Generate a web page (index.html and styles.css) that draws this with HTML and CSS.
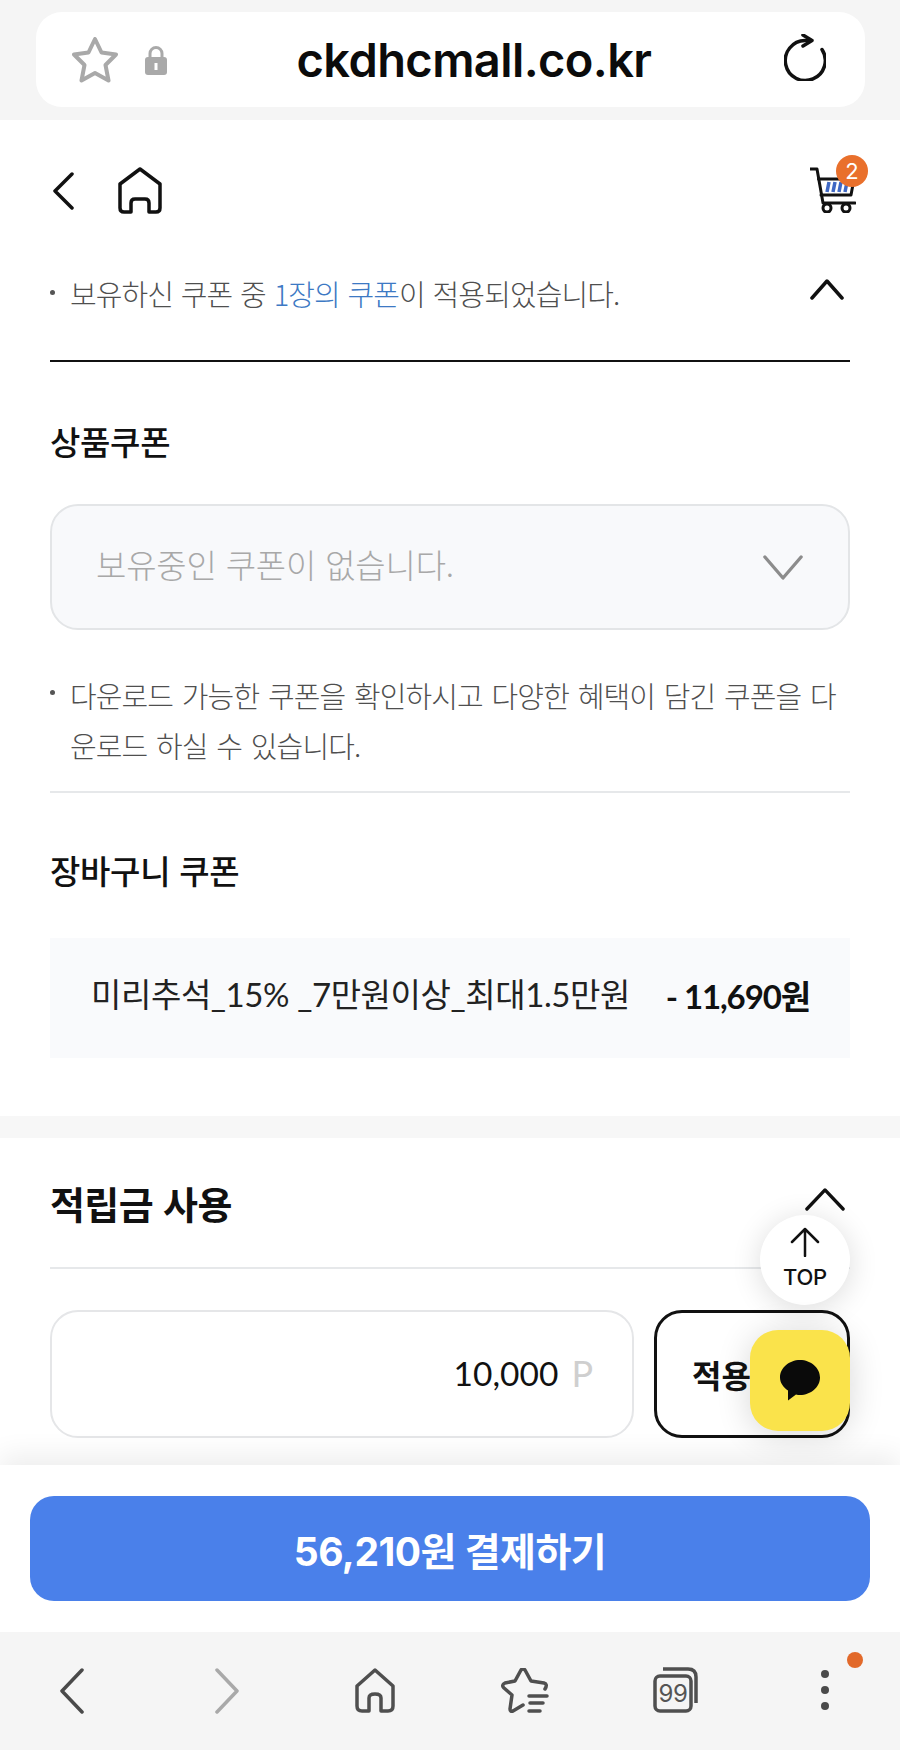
FILE: index.html
```html
<!DOCTYPE html>
<html lang="ko">
<head>
<meta charset="utf-8">
<title>ckdhcmall.co.kr</title>
<link rel="stylesheet" href="styles.css">
</head>
<body>
<div class="screen">
  <div class="browser-top">
    <div class="url-pill">
      <svg class="ic-star" viewBox="0 0 46 46"><path d="M23 2 L29.500 15.500 L44 17.500 L33.500 28 L36.500 43.500 L23 36 L9.500 43.500 L12.500 28 L2 17.500 L16.500 15.500 Z"/></svg>
      <svg class="ic-lock" viewBox="0 0 24 30"><path class="shackle" d="M6 14 V8.500 a6 6 0 0 1 12 0 V14"/><rect class="lock-body" x="1" y="12" width="22" height="18" rx="3"/><rect class="lock-hole" x="10.500" y="18" width="3" height="7"/></svg>
      <span class="url-text">ckdhcmall.co.kr</span>
      <svg class="ic-reload" viewBox="0 0 42 47"><path d="M38 15.500 A20 20 0 1 1 21 6.500 H26"/><path d="M19 1 L28 6.500 L19 12"/></svg>
    </div>
  </div>

  <main class="main">
    <header class="page-head">
      <div class="head-left">
        <svg class="ic-back" viewBox="0 0 21 38"><path d="M19 2 L2 19 L19 36"/></svg>
        <svg class="ic-home" viewBox="0 0 44 47"><path d="M22 2 L42 17 V41 Q42 45 38 45 H31 V36 Q31 32 27 32 H17 Q13 32 13 36 V45 H6 Q2 45 2 41 V17 Z"/></svg>
      </div>
      <div class="cart">
        <svg class="ic-cart" viewBox="0 0 46 46"><path class="cart-line" d="M0.500 2 H7 L13 36 H45"/><path class="cart-line" d="M8.500 12 H44 L41 28 H11"/><path class="cart-bars" d="M17 25 L19 15 M23 25 L25 15 M29 25 L31 15 M35 25 L37 15"/><circle class="cart-line" cx="17" cy="41" r="4"/><circle class="cart-line" cx="36" cy="41" r="4"/></svg>
        <span class="cart-badge">2</span>
      </div>
    </header>

    <section class="coupons">
      <div class="notice-row">
        <p class="note note-top">보유하신 쿠폰 중 <span class="blue">1장의 쿠폰</span>이 적용되었습니다.</p>
        <svg class="ic-up" viewBox="0 0 34 22"><path d="M2 20 L17 3 L32 20"/></svg>
      </div>

      <h2 class="sub-title sub-first">상품쿠폰</h2>
      <div class="select-box">
        <span>보유중인 쿠폰이 없습니다.</span>
        <svg class="ic-down" viewBox="0 0 42 26"><path d="M2 2 L21 24 L40 2"/></svg>
      </div>
      <p class="note note-long">다운로드 가능한 쿠폰을 확인하시고 다양한 혜택이 담긴 쿠폰을 다운로드 하실 수 있습니다.</p>

      <h2 class="sub-title sub-second">장바구니 쿠폰</h2>
      <div class="coupon-row">
        <span class="coupon-name">미리추석_15% _7만원이상_최대1.5만원</span>
        <strong class="coupon-price">- 11,690원</strong>
      </div>
    </section>

    <section class="points">
      <div class="points-head">
        <h2 class="points-title">적립금 사용</h2>
        <svg class="ic-up-lg" viewBox="0 0 42 25"><path d="M2 23 L21 3 L40 23"/></svg>
      </div>
      <div class="points-form">
        <div class="points-input"><span class="points-val">10,000</span><span class="points-unit">P</span></div>
        <button class="apply-btn">적용</button>
      </div>
    </section>

    <button class="top-btn">
      <svg class="ic-arrow" viewBox="0 0 30 30"><path d="M15 29 V2 M2 15 L15 2 L28 15"/></svg>
      <span>TOP</span>
    </button>
    <div class="kakao">
      <svg class="ic-talk" viewBox="0 0 40 41"><path d="M20 0 C31 0 40 8 40 17.500 C40 27 31 35 20 35 C18.500 35 17.500 34.900 16 34.500 L8 40.500 L8 30.500 C3 27 0 22.500 0 17.500 C0 8 9 0 20 0 Z"/></svg>
    </div>
  </main>

  <div class="pay-bar">
    <button class="pay-btn">56,210원 결제하기</button>
  </div>

  <nav class="browser-nav">
    <svg class="nav-chev" viewBox="0 0 24 46"><path d="M22 2 L2 23 L22 44"/></svg>
    <svg class="nav-chev nav-off" viewBox="0 0 24 46"><path d="M2 2 L22 23 L2 44"/></svg>
    <svg class="nav-home" viewBox="0 0 40 45"><path d="M20 2 L38 18 V38 Q38 43 33 43 H26 V30 Q26 26 20 26 Q14 26 14 30 V43 H7 Q2 43 2 38 V18 Z"/></svg>
    <svg class="nav-fav" viewBox="0 0 48 46"><path d="M44 21 Q47 16 43 15 L30 13 L24 2 Q22 0 20 2 L14 13 L4 15 Q0 17 3 20 L11 27 L9 41 Q9 44 12 43 L22 37"/><path d="M28 28 H46 M29 35 H42 M28 43 H39"/></svg>
    <div class="nav-tabs">
      <svg class="nav-tabs-ic" viewBox="0 0 46 46"><rect x="2" y="9" width="36" height="35" rx="5"/><path d="M10 2 H35 Q43 2 43 10 V36"/></svg>
      <span class="tabs-num">99</span>
    </div>
    <div class="nav-more">
      <i class="dot"></i><i class="dot"></i><i class="dot"></i>
      <i class="more-badge"></i>
    </div>
  </nav>
</div>
</body>
</html>
```

FILE: styles.css
```css
* { box-sizing: border-box; }
html, body { margin: 0; padding: 0; }
body {
  background: #fff;
  font-family: "Lato", "Noto Sans CJK KR", sans-serif;
  color: #111;
}
svg { display: block; fill: none; }
h2, p { margin: 0; }
button { font-family: inherit; padding: 0; cursor: pointer; }

.screen {
  width: 900px;
  height: 1750px;
  display: flex;
  flex-direction: column;
  overflow: hidden;
}

/* browser url bar */
.browser-top {
  height: 120px;
  flex: none;
  background: #f5f5f5;
  padding: 12px 35px 13px 36px;
}
.url-pill {
  height: 95px;
  background: #fff;
  border-radius: 26px;
  display: flex;
  align-items: center;
  padding: 0 39px 0 36px;
}
.ic-star { width: 46px; height: 46px; stroke: #a9a9a9; stroke-width: 4; stroke-linejoin: round; }
.ic-lock { width: 24px; height: 30px; margin-left: 26px; }
.shackle { stroke: #a9a9a9; stroke-width: 3; }
.lock-body { fill: #a9a9a9; }
.lock-hole { fill: #fff; }
.url-text {
  flex: 1;
  text-align: center;
  font-family: "Inter", sans-serif;
  font-size: 47px;
  font-weight: 600;
  letter-spacing: -0.6px;
  color: #0b0b0b;
  padding-right: 4px;
}
.ic-reload { width: 42px; height: 47px; margin-bottom: 4px; stroke: #111; stroke-width: 3.500; stroke-linecap: round; stroke-linejoin: round; }

/* main page */
.main {
  position: relative;
  height: 1345px;
  flex: none;
  overflow: hidden;
  background: #fff;
}
.page-head {
  height: 120px;
  padding: 47px 44px 0 53px;
  display: flex;
  justify-content: space-between;
}
.head-left { display: flex; gap: 44px; height: 47px; align-items: center; }
.ic-back { width: 21px; height: 38px; stroke: #111; stroke-width: 3.500; stroke-linecap: round; stroke-linejoin: round; }
.ic-home { width: 44px; height: 47px; stroke: #111; stroke-width: 3.500; stroke-linejoin: round; }
.cart { position: relative; width: 46px; height: 46px; }
.ic-cart { width: 46px; height: 46px; }
.cart-line { stroke: #111; stroke-width: 3; stroke-linecap: round; stroke-linejoin: round; }
.cart-bars { stroke: #3f68c4; stroke-width: 3.500; }
.cart-badge {
  position: absolute;
  top: -12px;
  right: -12px;
  width: 32px;
  height: 32px;
  border-radius: 50%;
  background: #e9702c;
  color: #fff;
  font-family: "Inter", sans-serif;
  font-size: 22px;
  line-height: 32px;
  text-align: center;
}

.coupons { padding: 0 50px; height: 876px; }
.notice-row {
  height: 122px;
  border-bottom: 2px solid #111;
  display: flex;
  justify-content: space-between;
  padding: 0 0 0 20px;
}
.note {
  position: relative;
  font-family: "Noto Sans CJK KR", sans-serif;
  font-size: 29px;
  font-weight: 300;
  color: #4f4f4f;
  letter-spacing: -0.9px;
}
.note::before {
  content: "";
  position: absolute;
  left: -20px;
  width: 5px;
  height: 5px;
  border-radius: 50%;
  background: #555;
}
.note-top { line-height: 42px; padding-top: 32px; word-spacing: 0.500px; }
.note-top::before { top: 50px; }
.blue { color: #3d79c4; }
.ic-up { width: 34px; height: 22px; margin: 38px 6px 0 0; stroke: #111; stroke-width: 3.500; stroke-linecap: round; stroke-linejoin: round; }

.sub-title { font-family: "Noto Sans CJK KR", sans-serif; font-size: 33px; line-height: 44px; font-weight: 500; letter-spacing: -0.3px; color: #111; }
.sub-first { margin-top: 57px; }
.select-box {
  margin-top: 41px;
  height: 126px;
  border: 2px solid #e3e5e7;
  border-radius: 28px;
  background: #f8f9fb;
  display: flex;
  align-items: center;
  justify-content: space-between;
  padding: 0 45px 0 44px;
  font-family: "Noto Sans CJK KR", sans-serif;
  font-size: 33px;
  font-weight: 300;
  letter-spacing: -0.2px;
  color: #a8a8a8;
}
.select-box span { padding-bottom: 6px; }
.ic-down { width: 40px; height: 25px; stroke: #8c8c8c; stroke-width: 3.500; stroke-linecap: round; stroke-linejoin: round; }
.note-long {
  margin-top: 40px;
  line-height: 50px;
  padding: 0 0 21px 20px;
  border-bottom: 2px solid #e6e8ea;
  word-spacing: 1.500px;
}
.note-long::before { top: 20px; left: 0; }
.sub-second { margin-top: 55px; }
.coupon-row {
  margin-top: 46px;
  height: 120px;
  background: #f9fafc;
  display: flex;
  align-items: center;
  justify-content: space-between;
  padding: 0 40px 6px 41px;
}
.coupon-name { font-size: 33px; font-weight: 400; letter-spacing: -0.4px; color: #222; padding-bottom: 4px; }
.coupon-price { font-size: 33px; font-weight: 700; letter-spacing: -1.1px; color: #111; }

.points {
  border-top: 22px solid #f7f7f7;
  padding: 0 50px;
}
.points-head {
  height: 131px;
  border-bottom: 2px solid #e6e8ea;
  display: flex;
  justify-content: space-between;
  padding-top: 38px;
}
.points-title { font-family: "Noto Sans CJK KR", sans-serif; font-size: 38px; line-height: 54px; font-weight: 700; letter-spacing: -0.6px; }
.ic-up-lg { width: 40px; height: 24px; margin: 11px 5px 0 0; stroke: #111; stroke-width: 3.500; stroke-linecap: round; stroke-linejoin: round; }
.points-form { margin-top: 41px; display: flex; gap: 20px; height: 128px; }
.points-input {
  width: 584px;
  border: 2px solid #e5e6e8;
  border-radius: 28px;
  display: flex;
  align-items: center;
  justify-content: flex-end;
  gap: 13px;
  padding: 0 39px 3px 0;
  background: #fff;
}
.points-val { font-size: 33.500px; font-weight: 400; color: #111; }
.points-unit { font-size: 36px; color: #cfcfcf; }
.apply-btn {
  width: 196px;
  border: 3px solid #111;
  border-radius: 28px;
  background: #fff;
  font-family: "Noto Sans CJK KR", sans-serif;
  font-size: 32px;
  font-weight: 700;
  color: #111;
  text-align: left;
  padding-left: 35px;
}

/* floating buttons over content */
.top-btn {
  position: absolute;
  left: 760px;
  top: 1095px;
  width: 90px;
  height: 90px;
  border: 0;
  border-radius: 50%;
  background: #fff;
  box-shadow: 0 4px 30px rgba(0,0,0,.14);
  display: flex;
  flex-direction: column;
  align-items: center;
  justify-content: center;
  color: #111;
  font-size: 22px;
  font-weight: 500;
  font-family: "Inter", sans-serif;
  letter-spacing: -0.3px;
  line-height: 26px;
  padding-bottom: 4px;
}
.ic-arrow { width: 30px; height: 30px; margin-bottom: 7px; stroke: #111; stroke-width: 2.500; stroke-linecap: round; stroke-linejoin: round; }
.kakao {
  position: absolute;
  left: 750px;
  top: 1210px;
  width: 100px;
  height: 101px;
  border-radius: 28px;
  background: #fae34b;
  box-shadow: 0 4px 34px rgba(0,0,0,.16);
  display: flex;
  align-items: center;
  justify-content: center;
}
.ic-talk { width: 40px; height: 41px; fill: #0a0a0a; }

/* pay bar */
.pay-bar {
  position: relative;
  flex: none;
  height: 167px;
  background: #fff;
  padding: 31px 30px 0;
  box-shadow: 0 -10px 26px rgba(0,0,0,.07);
}
.pay-btn {
  width: 840px;
  height: 105px;
  border: 0;
  border-radius: 24px;
  background: #4a80ea;
  color: #fff;
  font-family: "Inter", "Noto Sans CJK KR", sans-serif;
  font-size: 39px;
  font-weight: 700;
  letter-spacing: -0.5px;
}

/* browser nav */
.browser-nav {
  position: relative;
  flex: 1;
  background: #f5f5f5;
}
.browser-nav > * { position: absolute; }
.nav-chev { left: 60px; top: 36px; width: 24px; height: 46px; stroke: #4a4a4a; stroke-width: 3.500; stroke-linecap: round; stroke-linejoin: round; }
.nav-off { left: 215px; stroke: #a9a9a9; }
.nav-home { left: 355px; top: 36px; width: 40px; height: 45px; stroke: #4f4f4f; stroke-width: 3.500; stroke-linejoin: round; }
.nav-fav { left: 501px; top: 36px; width: 48px; height: 46px; stroke: #4f4f4f; stroke-width: 3.500; stroke-linecap: round; stroke-linejoin: round; }
.nav-tabs { left: 653px; top: 35px; width: 46px; height: 46px; }
.nav-tabs-ic { width: 46px; height: 46px; stroke: #4f4f4f; stroke-width: 3.500; }
.tabs-num {
  position: absolute;
  left: 2px;
  top: 9px;
  width: 36px;
  height: 35px;
  text-align: center;
  font-family: "Inter", sans-serif;
  font-size: 24px;
  line-height: 35px;
  letter-spacing: -0.5px;
  color: #555;
}
.nav-more { left: 821px; top: 38px; width: 8px; display: flex; flex-direction: column; gap: 8px; }
.dot { width: 8px; height: 8px; border-radius: 50%; background: #4a4a4a; }
.more-badge {
  position: absolute;
  left: 26px;
  top: -18px;
  width: 16px;
  height: 16px;
  border-radius: 50%;
  background: #e2692a;
}
```
